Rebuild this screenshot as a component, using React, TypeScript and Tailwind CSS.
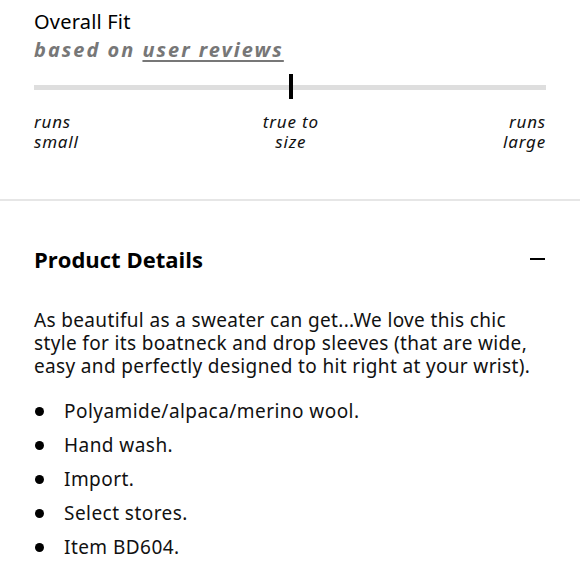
export default function App() {
  const bullets = ['Polyamide/alpaca/merino wool.', 'Hand wash.', 'Import.', 'Select stores.', 'Item BD604.'];

  return (
    <div className="w-[580px] h-[580px] overflow-hidden bg-white text-black font-['Noto_Sans',sans-serif]">
      <div className="px-[34px] pt-[8px]">
        <h3 className="text-[20px] leading-[27px] tracking-[0.2px]">Overall Fit</h3>
        <p className="text-[20px] leading-[30px] font-bold italic tracking-[2px] text-[#777]">
          based on <span className="underline underline-offset-[3px]">user reviews</span>
        </p>

        <div className="relative mt-[20px] h-[5px] w-[512px] bg-[#dedede]">
          <div className="absolute left-[255px] top-[-11px] h-[25px] w-[4px] bg-black" />
        </div>

        <div className="mt-[22px] flex justify-between text-[17px] leading-[20px] italic tracking-[0.8px] text-[#111]">
          <span>runs<br />small</span>
          <span className="text-center">true to<br />size</span>
          <span className="text-right">runs<br />large</span>
        </div>
      </div>

      <div className="mt-[47px] h-[2px] bg-[#e6e6e6]" />

      <div className="pl-[34px]">
        <div className="mt-[44px] mr-[34px] flex items-center justify-between">
          <h2 className="text-[22px] font-bold leading-[28px] font-['Open_Sans',sans-serif]">Product Details</h2>
          <span className="mr-[1px] block h-[2px] w-[15px] bg-black" />
        </div>

        <p className="mt-[36px] text-[19px] leading-[23px] tracking-[0.35px] text-[#111] whitespace-nowrap">
          As beautiful as a sweater can get...We love this chic
          <br />
          style for its boatneck and drop sleeves (that are wide,
          <br />
          easy and perfectly designed to hit right at your wrist).
        </p>

        <ul className="mt-[16px]">
          {bullets.map((b) => (
            <li key={b} className="flex items-center h-[34px] text-[19px] tracking-[0.45px] text-[#111]">
              <span className="ml-[1px] mr-[20px] h-[9px] w-[9px] rounded-full bg-black" />
              {b}
            </li>
          ))}
        </ul>
      </div>
    </div>
  );
}
